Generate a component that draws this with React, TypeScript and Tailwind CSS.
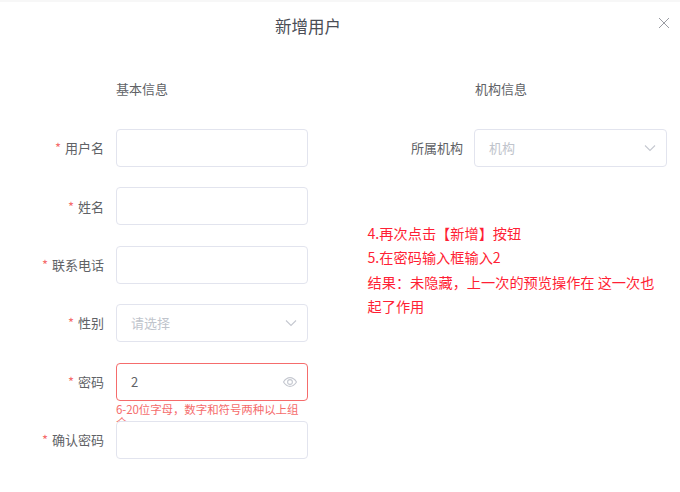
const font = { fontFamily: '"Noto Sans CJK SC", "Liberation Sans", sans-serif' };

function Chevron() {
  return (
    <svg width="14" height="14" viewBox="0 0 14 14" fill="none" stroke="#c5c8d0" strokeWidth="1.1" className="shrink-0">
      <path d="M2 4.5 L7 9.5 L12 4.5" />
    </svg>
  );
}

function Eye() {
  return (
    <svg width="16" height="16" viewBox="0 0 16 16" fill="none" stroke="#c5c8d0" strokeWidth="1.1" className="shrink-0">
      <path d="M1.5 8 C3.5 4.8 5.6 3.6 8 3.6 C10.4 3.6 12.5 4.8 14.5 8 C12.5 11.2 10.4 12.4 8 12.4 C5.6 12.4 3.5 11.2 1.5 8 Z" />
      <circle cx="8" cy="8" r="2.4" />
    </svg>
  );
}

function Row({
  label,
  required,
  labelWidth,
  children,
}: {
  label: string;
  required?: boolean;
  labelWidth: string;
  children?: React.ReactNode;
}) {
  return (
    <div className="flex items-center gap-3 h-[38px]">
      <div className={`${labelWidth} text-right text-[13px] text-[#606266] whitespace-nowrap`}>
        {required && <span className="text-[#f56c6c] mr-1">*</span>}
        {label}
      </div>
      {children ?? <Box />}
    </div>
  );
}

function Box({ text, value, icon, error, width }: { text?: string; value?: string; icon?: React.ReactNode; error?: boolean; width?: string }) {
  return (
    <div
      className={`${width ?? "w-[192px]"} h-[38px] rounded border flex items-center justify-between pl-[14px] pr-[9px] text-[13px] bg-white ${
        error ? "border-[#f56c6c]" : "border-[#e2e4ee]"
      }`}
    >
      <span className={value ? "text-[#606266]" : "text-[#c0c4cc]"}>{value ?? text}</span>
      {icon}
    </div>
  );
}

export default function App() {
  return (
    <div className="relative w-[680px] h-[492px] overflow-hidden bg-white" style={font}>
      <div className="h-[2px] bg-[#f7f7f7]" />
      <div className="flex items-center h-[48px] relative">
        <div className="w-[616px] text-center text-[16.5px] text-[#4a4d55]">新增用户</div>
        <svg width="12" height="12" viewBox="0 0 12 12" fill="none" stroke="#9a9ca3" strokeWidth="1" className="absolute left-[658px] top-[15px]">
          <path d="M1 1 L11 11 M11 1 L1 11" />
        </svg>
      </div>

      <div className="flex mt-[29px]">
        <div className="w-[359px] pl-[116px]">
          <div className="text-[13px] text-[#606266] leading-5 h-5">基本信息</div>
        </div>
        <div className="pl-[116px]">
          <div className="text-[13px] text-[#606266] leading-5 h-5">机构信息</div>
        </div>
      </div>

      <div className="flex mt-[30px]">
        <div className="w-[359px] flex flex-col gap-[20.4px] pl-3">
          <Row label="用户名" required labelWidth="w-[92px]" />
          <Row label="姓名" required labelWidth="w-[92px]" />
          <Row label="联系电话" required labelWidth="w-[92px]" />
          <Row label="性别" required labelWidth="w-[92px]">
            <Box text="请选择" icon={<Chevron />} />
          </Row>
          <div className="relative">
            <Row label="密码" required labelWidth="w-[92px]">
              <Box value="2" icon={<Eye />} error />
            </Row>
            <div className="absolute left-[104px] top-[40px] w-[188px] text-[11.5px] tracking-[-0.1px] leading-[13px] text-[#f56c6c]">
              6-20位字母，数字和符号两种以上组合
            </div>
          </div>
          <div className="relative">
            <Row label="确认密码" required labelWidth="w-[92px]" />
          </div>
        </div>
        <div className="pl-px">
          <Row label="所属机构" labelWidth="w-[102px] translate-x-px">
            <Box text="机构" icon={<Chevron />} width="w-[193px]" />
          </Row>
        </div>
      </div>

      <div className="absolute left-[367.5px] top-[220.5px] w-[295px] text-[14.2px] leading-[24.6px] text-[#ff1f35]">
        <p>4.再次点击【新增】按钮</p>
        <p>5.在密码输入框输入2</p>
        <p>结果：未隐藏，上一次的预览操作在 这一次也起了作用</p>
      </div>
    </div>
  );
}
